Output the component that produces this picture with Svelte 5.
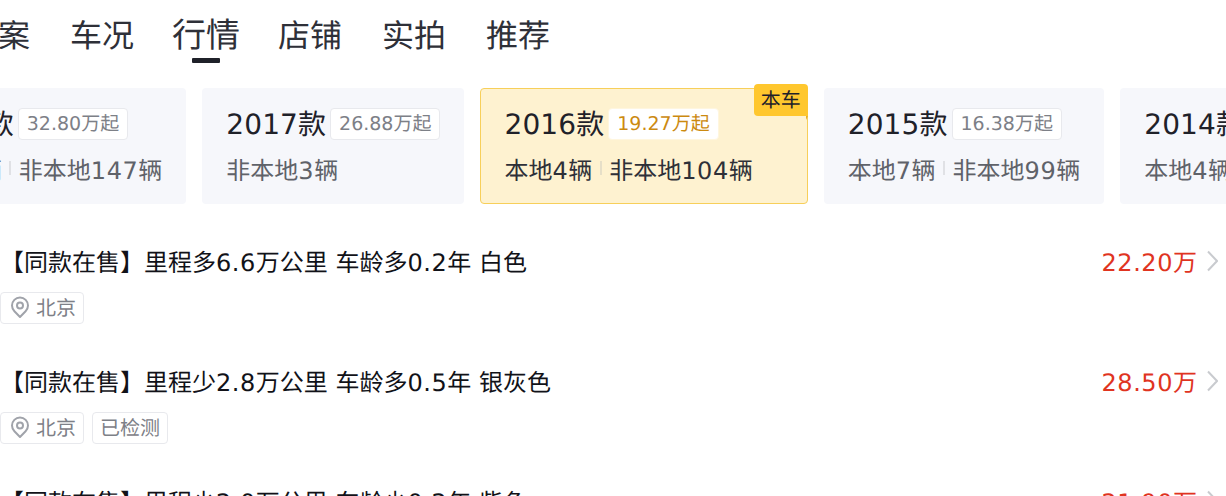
<script>
  const tabs = ['档案', '车况', '行情', '店铺', '实拍', '推荐']
  const years = [
    { year: '2018款', price: '32.80万起', local: '本地7辆', other: '非本地147辆' },
    { year: '2017款', price: '26.88万起', other: '非本地3辆' },
    { year: '2016款', price: '19.27万起', local: '本地4辆', other: '非本地104辆', current: true },
    { year: '2015款', price: '16.38万起', local: '本地7辆', other: '非本地99辆' },
    { year: '2014款', price: '12.58万起', local: '本地4辆', other: '非本地86辆' }
  ]
  const cars = [
    { title: '【同款在售】里程多6.6万公里 车龄多0.2年 白色', price: '22.20万', tags: [] },
    { title: '【同款在售】里程少2.8万公里 车龄多0.5年 银灰色', price: '28.50万', tags: ['已检测'] },
    { title: '【同款在售】里程少2.0万公里 车龄少0.2年 紫色', price: '21.90万', tags: [] }
  ]

  // numbers run a little wider than the chinese text around them
  const runs = (text) => text.split(/([0-9.]+)/).filter(Boolean)
</script>

{#snippet spaced(text)}
  {#each runs(text) as run}{#if /^[0-9.]+$/.test(run)}<span class="num">{run}</span>{:else}{run}{/if}{/each}
{/snippet}

<main class="page">
  <nav class="tabs">
    {#each tabs as tab}
      <span class="tab" class:active={tab === '行情'}>{tab}</span>
    {/each}
  </nav>

  <section class="years">
    {#each years as item}
      <div class="year-card" class:current={item.current}>
        {#if item.current}
          <span class="badge">本车</span>
        {/if}
        <div class="year-top">
          <span class="year">{item.year}</span>
          <span class="from">{item.price}</span>
        </div>
        <div class="year-stock">
          {#if item.local}
            <span>{@render spaced(item.local)}</span>
            <i class="sep"></i>
          {/if}
          <span>{@render spaced(item.other)}</span>
        </div>
      </div>
    {/each}
  </section>

  <section class="cars">
    {#each cars as car}
      <div class="car">
        <div class="car-head">
          <span class="car-title">{@render spaced(car.title)}</span>
          <span class="car-price">{@render spaced(car.price)}</span>
          <svg class="arrow" width="12" height="24" viewBox="0 0 12 24" fill="none">
            <path d="M2 2.5 L11 12 L2 21.5" stroke="#c9cbcf" stroke-width="2" />
          </svg>
        </div>
        <div class="car-tags">
          <span class="tag">
            <svg width="20" height="24" viewBox="0 0 20 24" fill="none">
              <path d="M10 21 L4.4 15.2 A8 8 0 1 1 15.6 15.2 Z" stroke="#a0a3aa" stroke-width="2" stroke-linejoin="round" />
              <circle cx="10" cy="9.6" r="3" stroke="#a0a3aa" stroke-width="2" />
            </svg>
            北京
          </span>
          {#each car.tags as tag}
            <span class="tag">{tag}</span>
          {/each}
        </div>
      </div>
    {/each}
  </section>
</main>

<style>
  :global(body) {
    overflow: hidden;
    background: #fff;
  }
  .page {
    height: 496px;
    overflow: hidden;
    font-family: 'DejaVu Sans', 'Noto Sans CJK SC', sans-serif;
    text-rendering: geometricPrecision;
    color: #1f2129;
  }
  .num {
    letter-spacing: 0.55px;
  }
  .tabs {
    display: flex;
    gap: 40px;
    margin-left: -34px;
    height: 88px;
  }
  .tab {
    position: relative;
    font-size: 32px;
    line-height: 40px;
    padding-top: 16px;
    height: 56px;
    color: #2e3038;
    white-space: nowrap;
  }
  .tab.active {
    font-size: 34px;
    margin: 0 -2px;
  }
  .tab.active::after {
    content: '';
    position: absolute;
    left: 20px;
    top: 58px;
    width: 28px;
    height: 5px;
    border-radius: 1px;
    background: #1f2129;
  }
  .years {
    display: flex;
    gap: 16px;
    margin-left: -110px;
    height: 116px;
  }
  .year-card {
    position: relative;
    flex: none;
    box-sizing: border-box;
    height: 116px;
    padding: 20px 24px 0;
    background: #f6f7fb;
    border-radius: 4px;
  }
  .year-card.current {
    background: #fef2d0;
    border: 1px solid #f7cf5a;
    padding: 19px 54px 0 23px;
  }
  .badge {
    position: absolute;
    top: -5px;
    right: -1px;
    height: 32px;
    width: 54px;
    line-height: 32px;
    text-align: center;
    font-size: 20px;
    background: #ffc72e;
    border-radius: 4px 4px 0 4px;
    color: #1f2129;
  }
  .badge::after {
    content: '';
    position: absolute;
    right: 0;
    top: 32px;
    border-top: 4px solid #e5b02a;
    border-right: 2px solid transparent;
  }
  .year-top {
    display: flex;
    align-items: center;
    gap: 4px;
    height: 32px;
    white-space: nowrap;
  }
  .year {
    font-size: 28px;
    line-height: 28px;
    margin-top: 2px;
    letter-spacing: 0.1px;
    color: #1f2129;
  }
  .from {
    box-sizing: border-box;
    height: 32px;
    line-height: 30px;
    padding: 0 8px;
    font-size: 19px;
    color: #7d8087;
    background: #fff;
    border: 1px solid #e8e9ed;
    border-radius: 4px;
  }
  .current .from {
    color: #cc8a10;
    border-color: #fff6df;
  }
  .year-stock {
    display: flex;
    align-items: center;
    margin-top: 12px;
    height: 32px;
    font-size: 24px;
    color: #5f6269;
    white-space: nowrap;
  }
  .current .year-stock {
    color: #2e3038;
  }
  .sep {
    width: 2px;
    height: 14px;
    margin: 0 7.5px;
    background: #e0e1e5;
  }
  .current .sep {
    background: #e6dfc8;
  }
  .cars {
    margin-top: 38px;
  }
  .car {
    height: 120px;
  }
  .car-head {
    display: flex;
    align-items: center;
    height: 40px;
  }
  .car-title {
    flex: 1;
    margin-top: -4px;
    font-size: 24px;
    color: #111218;
    white-space: nowrap;
  }
  .car-price {
    margin-top: -4px;
    font-size: 24px;
    color: #e0341f;
  }
  .arrow {
    margin: -2px 8px 0 9px;
  }
  .car-tags {
    display: flex;
    gap: 8px;
    margin-top: 10px;
  }
  .tag {
    box-sizing: border-box;
    display: flex;
    align-items: center;
    gap: 6px;
    height: 32px;
    padding: 0 7px 3px;
    font-size: 20px;
    color: #7d8087;
    border: 1px solid #e8e9ed;
    border-radius: 4px;
  }
  .tag svg {
    margin: 3px 0 0 2px;
  }
</style>
